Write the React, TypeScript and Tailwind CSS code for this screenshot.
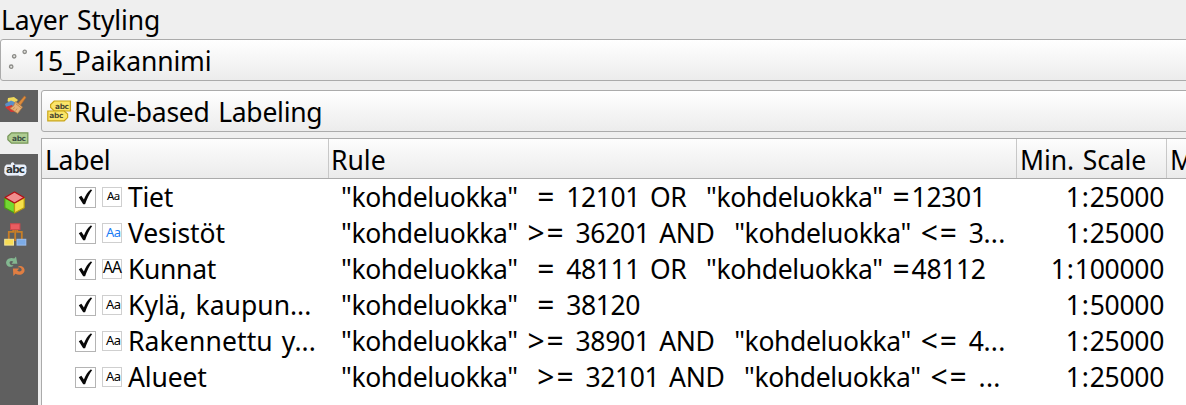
import type { ReactNode } from "react";

type LabelRule = {
  name: string;
  nameClass: string;
  rule: string;
  minScale: string;
  sample: string;
  sampleClass: string;
};

const rules: LabelRule[] = [
  {
    name: "Tiet",
    nameClass: "tracking-[-0.25px]",
    rule: '"kohdeluokka"  = 12101 OR  "kohdeluokka" =12301',
    minScale: "1:25000",
    sample: "Aa",
    sampleClass: "text-[11.5px] pl-[4px] pb-[2px] text-black",
  },
  {
    name: "Vesistöt",
    nameClass: "tracking-[-0.1px]",
    rule: '"kohdeluokka" >= 36201 AND  "kohdeluokka" <= 3...',
    minScale: "1:25000",
    sample: "Aa",
    sampleClass: "text-[13px] pl-[3px] pb-[2px] text-[#1a7cf5]",
  },
  {
    name: "Kunnat",
    nameClass: "tracking-[-0.35px]",
    rule: '"kohdeluokka"  = 48111 OR  "kohdeluokka" =48112',
    minScale: "1:100000",
    sample: "AA",
    sampleClass: "text-[15.5px] tracking-[-0.8px] pb-[2px] text-black",
  },
  {
    name: "Kylä, kaupun...",
    nameClass: "tracking-[0px]",
    rule: '"kohdeluokka"  = 38120',
    minScale: "1:50000",
    sample: "Aa",
    sampleClass: "text-[13px] pl-[3px] pb-[2px] text-black",
  },
  {
    name: "Rakennettu y...",
    nameClass: "tracking-[0.12px]",
    rule: '"kohdeluokka" >= 38901 AND  "kohdeluokka" <= 4...',
    minScale: "1:25000",
    sample: "Aa",
    sampleClass: "text-[13px] pl-[3px] pb-[2px] text-black",
  },
  {
    name: "Alueet",
    nameClass: "tracking-[-0.15px]",
    rule: '"kohdeluokka"  >= 32101 AND  "kohdeluokka" <= ...',
    minScale: "1:25000",
    sample: "Aa",
    sampleClass: "text-[13px] pl-[3px] pb-[2px] text-black",
  },
];

function PointsIcon() {
  return (
    <svg width="20" height="22" viewBox="0 0 20 22" fill="#e4e4e0" stroke="#8b8b87" strokeWidth="1.3">
      <circle cx="3.2" cy="17.7" r="1.7" />
      <circle cx="6.2" cy="7.3" r="1.7" />
      <circle cx="16.7" cy="2.8" r="1.7" />
    </svg>
  );
}

function RuleLabelsIcon() {
  return (
    <svg width="25" height="22" viewBox="0 0 25 22" fontFamily="DejaVu Sans" fontWeight="bold" fontSize="7.4" letterSpacing="0">
      <path d="M7.2 1H23.4V11H7.2L3.6 7.4V4.6Z" fill="#fbe569" stroke="#c9a517" strokeWidth="1.2" />
      <path d="M.8 11H17.2L20.6 14V17.6L17.2 20.8H.8Z" fill="#fbe569" stroke="#c9a517" strokeWidth="1.2" />
      <text x="8" y="9" textLength="14" fill="#4d4a31">abc</text>
      <text x="2.3" y="18.3" textLength="14" fill="#4d4a31">abc</text>
    </svg>
  );
}

function BrushIcon() {
  return (
    <svg width="24" height="22" viewBox="0 0 24 22">
      <path d="M3.5 6 4 3 10 2 14 5 9 10Z" fill="#f0d95a" />
      <path d="M1 9 7 5.5 13 8 9 13 2 12Z" fill="#5b8fc8" />
      <path d="M1 12 8 10 12 16.5 7 17Z" fill="#d93431" />
      <path d="M14 8.5 20.5 1 22 2.4 16.3 10.5Z" fill="#dc8c3d" stroke="#b76928" strokeWidth=".6" />
      <path d="M11.5 6.5 18.5 12 13.7 18.4 5.8 13.2 9.5 11Z" fill="#e4b178" stroke="#b97b3d" strokeWidth=".7" />
      <path d="M11.7 8.6 17.3 13M10.5 12.4 9.3 14.2M13 13.6 11.7 15.6" stroke="#c07c3d" strokeWidth=".8" />
    </svg>
  );
}

function TagIcon() {
  return (
    <svg width="22" height="13" viewBox="0 0 22 13" letterSpacing="0">
      <path d="M4.5.8H20.8V11.2H4.5L.9 7.8V4.2Z" fill="#afcd91" stroke="#79985b" strokeWidth="1.3" />
      <text x="5" y="9" textLength="14" fontFamily="DejaVu Sans" fontWeight="bold" fontSize="7.4" fill="#3c5044">
        abc
      </text>
    </svg>
  );
}

function AbcIcon() {
  return (
    <svg width="24" height="16" viewBox="0 0 24 16" letterSpacing="0">
      <path
        d="M2.5 2.6H7V1.2Q8.6-.6 10.2 1.2V2.4H20.5Q23.4 3.6 22.2 7.5 23.4 12 20 13.2 17 14.8 14.5 13.4L3.5 13.7Q-.6 12.4.4 9-.4 4.2 2.5 2.6Z"
        fill="#e9effa"
      />
      <text x="2" y="11.4" textLength="19" fontFamily="DejaVu Sans" fontWeight="bold" fontSize="10.4" fill="#2e3436">
        abc
      </text>
    </svg>
  );
}

function CubeIcon() {
  return (
    <svg width="21" height="23" viewBox="0 0 21 23" strokeLinejoin="round" strokeWidth="1.2">
      <path d="M.8 7 10.5 12V22L.8 16.8Z" fill="#73d932" stroke="#4a9b13" />
      <path d="M20.2 7 10.5 12V22L20.2 16.8Z" fill="#f6e04a" stroke="#b79d0c" />
      <path d="M10.5 1 20 6.5 10.5 12 1 6.5Z" fill="#f08d8d" stroke="#b30d12" />
    </svg>
  );
}

function DiagramIcon() {
  return (
    <svg width="23" height="23" viewBox="0 0 23 23">
      <path d="M9.2 6V8.8H4.8V16.5M13.2 6V8.8H17.8V16.5M11.2 7V18" fill="none" stroke="#c87f27" strokeWidth="1.8" />
      <rect x="6.5" y=".8" width="9.4" height="5.8" fill="#e95d61" stroke="#cf474b" />
      <rect x=".7" y="16.3" width="8.8" height="5.8" fill="#f8dc55" stroke="#f3e596" />
      <rect x="13" y="16.3" width="8.8" height="5.8" fill="#7cabe6" stroke="#9abef0" />
    </svg>
  );
}

function HistoryIcon() {
  return (
    <svg width="22" height="21" viewBox="0 0 22 21">
      <path d="M12 .5 13.4 7.8 7.5 7.8 9.3 5.6C6.8 4 5 5.4 5.7 7.4 6.5 9.3 8.3 9.5 9.6 9 8.4 11.8 3.4 11.4 2.3 8 1.2 4.2 5.4.6 10.3 2.6Z" fill="#83b790" />
      <path d="M9.4 20 8.9 12.5 15.2 12.5 13.2 14.8C16 16.3 18 15 17.6 13.2 17.1 11.5 15.4 11.2 13.5 11.4 15.9 8.6 19.8 10.2 20.5 13.5 21.2 17.7 15.9 20.5 11.4 17.8Z" fill="#e07e42" />
    </svg>
  );
}

function SideTab({ active = false, children }: { active?: boolean; children: ReactNode }) {
  return (
    <div className={active ? "flex h-8 items-center bg-[#efefef] pl-[7px]" : "flex h-8 items-center bg-[#5f5f5f] pl-[4px]"}>
      {children}
    </div>
  );
}

function CheckBox() {
  return (
    <span className="flex h-[21px] w-[21px] shrink-0 items-center justify-center border border-[#b4b4b4] bg-white">
      <svg width="15" height="16" viewBox="0 0 15 16">
        <path d="M.8 8.3 3.4 6.8 5.9 10.5C7.6 6.5 9.6 3 12.6.6L14.2 1.1C11.4 5 9 9.8 7.1 15.2H5.2Z" fill="#080808" />
      </svg>
    </span>
  );
}

// Comparison operators are set wider than the rest of the expression.
function RuleText({ rule }: { rule: string }) {
  return rule.split(/([<>=]+|\.\.\.)/).map((part, index) => {
    if (/^[<>=]/.test(part)) {
      return (
        <span key={index} className="inline-block h-[30px] align-[-1px] text-[30px] leading-[30px] tracking-[2px]">
          {part}
        </span>
      );
    }

    return (
      <span key={index} className={part === "..." ? "tracking-[0.2px]" : "tracking-[-0.38px]"}>
        {part}
      </span>
    );
  });
}

function ScaleText({ scale }: { scale: string }) {
  const [left, right] = scale.split(":");

  return (
    <>
      {left}
      <span className="px-[1.2px]">:</span>
      {right}
    </>
  );
}

export default function App() {
  return (
    <div className="flex h-[405px] w-[1186px] flex-col overflow-hidden bg-[#efefef] font-['Noto_Sans',sans-serif] text-[26.5px] leading-[36px] tracking-[-0.55px] [word-spacing:1.95px] whitespace-pre text-black">
      <div className="h-[39px] pt-[2px] pl-px tracking-[-0.15px]">Layer Styling</div>
      <div className="mr-[-4px] flex h-[42px] shrink-0 items-center rounded-[3px] border border-[#ababab] bg-linear-to-b from-white to-[#ececec] pl-[7px]">
        <PointsIcon />
        <span className="ml-[5px] pt-[2px] tracking-[-0.12px]">15_Paikannimi</span>
      </div>

      <div className="mt-[9px] flex flex-1">
        <div className="w-[38px] shrink-0 bg-[#5f5f5f]">
          <SideTab><BrushIcon /></SideTab>
          <SideTab active><TagIcon /></SideTab>
          <SideTab><AbcIcon /></SideTab>
          <SideTab><CubeIcon /></SideTab>
          <SideTab><DiagramIcon /></SideTab>
          <SideTab><HistoryIcon /></SideTab>
        </div>

        <div className="ml-[3px] flex w-[1160px] shrink-0 flex-col">
          <div className="flex h-[42px] shrink-0 items-center rounded-[3px] border border-[#ababab] bg-linear-to-b from-white to-[#ececec] pl-[5px]">
            <RuleLabelsIcon />
            <span className="ml-[2px] pt-[2px] tracking-[-0.27px]">Rule-based Labeling</span>
          </div>

          <div className="mt-[6px] flex-1 border-t border-l border-[#ababab] bg-white">
            <div className="flex h-[40px] border-b border-[#ababab] bg-linear-to-b from-[#fdfdfd] to-[#ebebeb] tracking-[-0.3px]">
              <div className="w-[287px] shrink-0 border-r border-[#c8c8c8] pt-[3px] pl-[3px]">Label</div>
              <div className="w-[688px] shrink-0 border-r border-[#c8c8c8] pt-[3px] pl-[2px] tracking-[0px]">Rule</div>
              <div className="w-[150px] shrink-0 border-r border-[#c8c8c8] pt-[3px] pl-[3px] tracking-[-0.1px]">Min. Scale</div>
              <div className="pt-[3px] pl-[3px]">M</div>
            </div>
            {rules.map((item) => (
              <div key={item.name} className="flex h-[36px] items-center">
                <div className="flex w-[287px] shrink-0 items-center pl-[33px]">
                  <CheckBox />
                  <span className={`ml-[6px] flex h-[20px] w-[20px] shrink-0 items-center border border-[#cfcfcf] leading-none ${item.sampleClass}`}>
                    {item.sample}
                  </span>
                  <span className={`ml-[6px] ${item.nameClass}`}>{item.name}</span>
                </div>
                <div className="h-[36px] w-[688px] shrink-0 pl-[12px] [word-spacing:3.3px]">
                  <RuleText rule={item.rule} />
                </div>
                <div className="w-[147px] shrink-0 text-right tracking-[-0.3px]">
                  <ScaleText scale={item.minScale} />
                </div>
              </div>
            ))}
          </div>
        </div>
      </div>
    </div>
  );
}
